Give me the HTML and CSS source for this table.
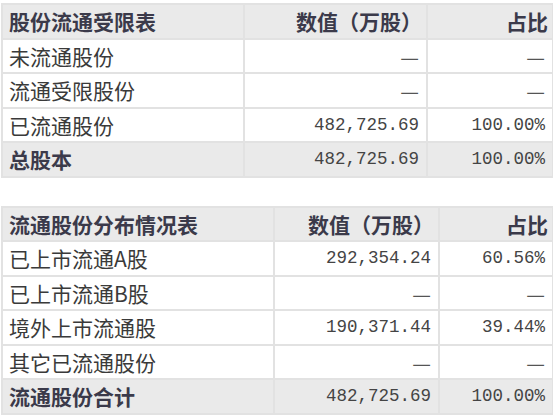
FILE: index.html
```html
<!DOCTYPE html>
<html lang="zh-CN">
<head>
<meta charset="utf-8">
<link rel="stylesheet" href="styles.css">
</head>
<body>
<table class="tbl t1">
  <colgroup><col class="c1"><col class="c2"><col class="c3"></colgroup>
  <tr class="head"><th class="name">股份流通受限表</th><th class="num">数值（万股）</th><th class="num">占比</th></tr>
  <tr><td class="name">未流通股份</td><td class="num dash">—</td><td class="num dash">—</td></tr>
  <tr><td class="name">流通受限股份</td><td class="num dash">—</td><td class="num dash">—</td></tr>
  <tr><td class="name">已流通股份</td><td class="num">482,725.69</td><td class="num">100.00%</td></tr>
  <tr class="total"><th class="name">总股本</th><td class="num">482,725.69</td><td class="num">100.00%</td></tr>
</table>
<table class="tbl t2">
  <colgroup><col class="c1"><col class="c2"><col class="c3"></colgroup>
  <tr class="head"><th class="name">流通股份分布情况表</th><th class="num">数值（万股）</th><th class="num">占比</th></tr>
  <tr><td class="name">已上市流通A股</td><td class="num">292,354.24</td><td class="num">60.56%</td></tr>
  <tr><td class="name">已上市流通B股</td><td class="num dash">—</td><td class="num dash">—</td></tr>
  <tr><td class="name">境外上市流通股</td><td class="num">190,371.44</td><td class="num">39.44%</td></tr>
  <tr><td class="name">其它已流通股份</td><td class="num dash">—</td><td class="num dash">—</td></tr>
  <tr class="total"><th class="name">流通股份合计</th><td class="num">482,725.69</td><td class="num">100.00%</td></tr>
</table>
</body>
</html>
```
FILE: styles.css
```css
html, body {
  margin: 0;
  padding: 0;
  background: #ffffff;
}
body {
  padding: 3px 0 0 1px;
  font-family: "Noto Sans CJK SC", "Noto Sans", sans-serif;
  color: #3a3a3a;
}
.tbl {
  border-collapse: collapse;
  width: 551px;
  table-layout: fixed;
  border: 2px solid #e2e2e2;
}
.t1 .c1 { width: 242px; }
.t1 .c2 { width: 183px; }
.t1 .c3 { width: 126px; }
.t2 { margin-top: 28px; }
.t2 .c1 { width: 272px; }
.t2 .c2 { width: 165px; }
.t2 .c3 { width: 114px; }
.tbl th, .tbl td {
  height: 32.5px;
  padding: 0 6px;
  border: 2px solid #e2e2e2;
  font-size: 21px;
  line-height: 24px;
  white-space: nowrap;
  overflow: hidden;
}
.tbl th {
  font-weight: bold;
  color: #3b3a4a;
}
.tbl .name { text-align: left; font-weight: normal; }
.tbl th.name { font-weight: bold; }
.tbl .num {
  text-align: right;
  padding-right: 7px;
}
.tbl th.num { padding-right: 4px; }
.tbl td.num {
  font-family: "Liberation Mono", "DejaVu Sans Mono", monospace;
  font-size: 17.5px;
  color: #444;
}
.tbl td.num.dash {
  font-family: "Noto Sans CJK SC", sans-serif;
  font-size: 21px;
  color: #555;
}
.head th, .total th, .total td {
  background: #eaeaea;
}
```
